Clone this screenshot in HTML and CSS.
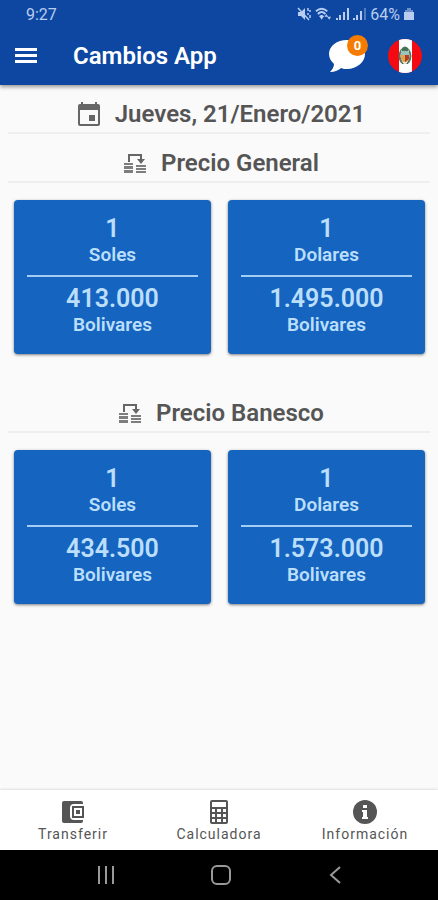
FILE: index.html
```html
<!DOCTYPE html>
<html lang="es">
<head>
<meta charset="utf-8">
<meta name="viewport" content="width=device-width, initial-scale=1">
<title>Cambios App</title>
<link rel="stylesheet" href="styles.css">
</head>
<body>
<svg class="defs" aria-hidden="true">
  <symbol id="exchange" viewBox="0 0 24 24">
    <path d="M6 11V4h12v5" fill="none" stroke="currentColor" stroke-width="2"/>
    <path d="M14 8h8l-4 5z"/>
    <path d="M1 12h9v2H1zM1 15h9v3H1zM1 19h9v3H1zM13 14h10v2H13zM13 17h10v2H13zM13 20h10v2H13z" opacity=".85"/>
  </symbol>
</svg>
<header class="top">
  <div class="status">
    <span>9:27</span>
    <div class="status-icons">
      <svg width="14" height="14" viewBox="0 0 14 14"><path d="M1 5h3l4-4v12L4 9H1z"/><path d="M1 1l11 12M11 1v3M11 6v2M13 3v2M13 8v3" fill="none" stroke="currentColor" stroke-width="1.500"/></svg>
      <svg width="17" height="14" viewBox="0 0 18 14"><g fill="none" stroke="currentColor" stroke-width="2"><path d="M1 4q6-5 12 0M3 7q4-4 8 0M5 10q2-2 4 0"/></g><path d="M7 13l-2-3h4zM12 7l2 3h-4zM15 13l-2-3h4z"/></svg>
      <svg width="13" height="14" viewBox="0 0 13 14"><path d="M0 11h2v2H0zM3 8h2v5H3zM7 5h2v8H7zM11 1h2v12h-2z"/></svg>
      <svg width="13" height="14" viewBox="0 0 13 14"><path d="M0 11h2v2H0zM3 8h2v5H3zM7 4h2v9H7z"/><path d="M11 1h2v12h-2z" opacity=".4"/></svg>
      <span class="battery-text">64%</span>
      <svg width="10" height="14" viewBox="0 0 10 14"><path d="M3 1h4v2h2v10H1V3h2z" opacity=".55"/><path d="M0 5h10v8H0z"/></svg>
    </div>
  </div>
  <div class="appbar">
    <button class="icon-button" aria-label="Menú"><svg width="24" height="24" viewBox="0 0 24 24"><path d="M1 4h22v3H1zM1 10h22v3H1zM1 16h22v3H1z"/></svg></button>
    <h1>Cambios App</h1>
    <button class="icon-button chat" aria-label="Mensajes">
      <svg width="36" height="34" viewBox="0 0 36 34"><path d="M18 1C8 1 0 7 0 15c0 4 2 7 5 10 0 3-2 6-4 8 5 0 9-2 11-4 2 1 4 1 6 1 10 0 18-7 18-15S28 1 18 1z"/></svg>
      <span class="badge">0</span>
    </button>
    <button class="icon-button" aria-label="Perú">
      <svg width="34" height="34" viewBox="0 0 34 34"><defs><clipPath id="disc"><circle cx="17" cy="17" r="17"/></clipPath></defs><g clip-path="url(#disc)"><path fill="#f50a12" d="M0 0h34v34H0z"/><path fill="#fff" d="M11 0h13v34H11z"/></g><path d="M14 10Q9 17 14 24M20 10q5 7 0 14" fill="none" stroke="#55785a" stroke-width="2"/><path fill="#9dc1bd" d="M13 11h8v6h-8z"/><path fill="#e2a24d" d="M13 16h8v4q-4 7-8 0z"/><path fill="#b63b25" d="M17 16h4v4l-4 3z"/><path fill="#477257" d="M14 9q3-3 6 0v3h-6z"/><path fill="#4d6350" d="M14 23q3 4 6 0v2h-6z"/></svg>
    </button>
  </div>
</header>
<main>
  <div class="heading date">
    <svg width="24" height="26" viewBox="0 0 24 26"><path d="M4 1h2v2h12V1h2v2h1q2 0 2 2v18q0 2-2 2H3q-2 0-2-2V5q0-2 2-2h1zM3 9v14h18V9zM12 14h6v6h-6z" fill-rule="evenodd"/></svg>
    <h2>Jueves, 21/Enero/2021</h2>
  </div>
  <section>
    <div class="heading"><svg width="24" height="24"><use href="#exchange"/></svg><h2>Precio General</h2></div>
    <div class="cards">
      <article class="card"><p class="amount">1</p><p class="unit">Soles</p><hr><p class="amount">413.000</p><p class="unit">Bolivares</p></article>
      <article class="card"><p class="amount">1</p><p class="unit">Dolares</p><hr><p class="amount">1.495.000</p><p class="unit">Bolivares</p></article>
    </div>
  </section>
  <section>
    <div class="heading"><svg width="24" height="24"><use href="#exchange"/></svg><h2>Precio Banesco</h2></div>
    <div class="cards">
      <article class="card"><p class="amount">1</p><p class="unit">Soles</p><hr><p class="amount">434.500</p><p class="unit">Bolivares</p></article>
      <article class="card"><p class="amount">1</p><p class="unit">Dolares</p><hr><p class="amount">1.573.000</p><p class="unit">Bolivares</p></article>
    </div>
  </section>
</main>
<nav class="tabs">
  <a href="#transferir"><svg width="24" height="24" viewBox="0 0 24 24"><path d="M3 1h17q2 0 2 2v1H13q-4 0-4 4v8q0 4 4 4h9v1q0 2-2 2H3q-2 0-2-2V3q0-2 2-2z"/><path d="M11 6h12v12H11zM13 8v8h8V8zM15 10h4v4h-4z" fill-rule="evenodd"/></svg><span>Transferir</span></a>
  <a href="#calculadora"><svg width="24" height="24" viewBox="0 0 24 24"><path fill-rule="evenodd" d="M5 0h14q2 0 2 2v20q0 2-2 2H5q-2 0-2-2V2q0-2 2-2zM5 2v5h14V2zM5 9v3h3V9zM10 9v3h4V9zM16 9v3h3V9zM5 14v3h3v-3zM10 14v3h4v-3zM16 14v3h3v-3zM5 19v3h3v-3zM10 19v3h4v-3zM16 19v3h3v-3z"/></svg><span>Calculadora</span></a>
  <a href="#informacion"><svg width="24" height="24" viewBox="0 0 24 24"><circle cx="12" cy="12" r="12"/><path fill="#fff" d="M10 5h4v3h-4zM9 10h5v7h1v2H9v-2h1v-5H9z"/></svg><span>Información</span></a>
</nav>
<div class="system">
  <button aria-label="Recientes"><svg width="20" height="20" viewBox="0 0 20 20"><path d="M3 1v18M10 1v18M17 1v18"/></svg></button>
  <button aria-label="Inicio"><svg width="20" height="20" viewBox="0 0 20 20"><rect x="1" y="1" width="18" height="18" rx="5"/></svg></button>
  <button aria-label="Atrás"><svg width="20" height="20" viewBox="0 0 20 20"><path d="M14 2l-9 8 9 8"/></svg></button>
</div>
</body>
</html>
```
FILE: styles.css
```css
* { box-sizing: border-box; }

body {
  margin: 0;
  min-height: 100vh;
  display: flex;
  flex-direction: column;
  background: #fafafa;
  color: #555;
  font-family: Roboto, "Liberation Sans", sans-serif;
}

h1, h2, p { margin: 0; }
svg { display: block; fill: currentColor; }
.defs { position: absolute; width: 0; height: 0; }

button {
  padding: 0;
  border: 0;
  background: none;
  color: inherit;
  font: inherit;
}

.top {
  background: #0d47a1;
  color: #fff;
  box-shadow: 0 2px 4px rgba(0, 0, 0, 0.4);
}

.status {
  display: flex;
  justify-content: space-between;
  height: 28px;
  padding: 0 24px 0 26px;
  align-items: center;
  font-size: 16px;
  color: #b9cdf0;
}

.status-icons { display: flex; align-items: center; gap: 4px; }

.appbar {
  display: flex;
  align-items: center;
  height: 57px;
  padding: 0 16px 2px 14px;
}

.appbar h1 {
  flex: 1;
  margin-left: 35px;
  font-size: 24px;
  line-height: 28px;
  font-weight: 600;
}

.chat { position: relative; margin-right: 23px; }

.badge {
  position: absolute;
  top: -4px;
  right: -3px;
  width: 21px;
  height: 21px;
  border-radius: 50%;
  background: #f57c00;
  font-size: 13px;
  line-height: 21px;
  font-weight: 700;
}

main { flex: 1; padding: 0 8px; }

.heading {
  display: flex;
  align-items: center;
  justify-content: center;
  gap: 14px;
  height: 49px;
  padding: 10px 0 0 4px;
  border-bottom: 2px solid #eee;
}

.heading svg { color: #666; }

.heading h2 {
  font-size: 24px;
  line-height: 28px;
  font-weight: 600;
}

.cards {
  display: grid;
  grid-template-columns: 1fr 1fr;
  gap: 17px;
  padding: 17px 5px 30px 6px;
}

.card {
  padding: 15px 13px 17px;
  border-radius: 4px;
  background: #1565c0;
  color: #bbdefb;
  text-align: center;
  box-shadow: 0 1px 3px rgba(0, 0, 0, 0.5);
}

.card hr {
  height: 2px;
  margin: 8px 0;
  border: 0;
  background: #a4cdf5;
}

.amount { font-size: 25px; line-height: 28px; font-weight: 600; }
.unit { font-size: 19px; line-height: 24px; font-weight: 600; }

.tabs {
  display: grid;
  grid-template-columns: repeat(3, 1fr);
  height: 60px;
  background: #fff;
  box-shadow: 0 0 3px rgba(0, 0, 0, 0.2);
}

.tabs a {
  display: flex;
  flex-direction: column;
  align-items: center;
  padding-top: 10px;
  gap: 1px;
  color: #555;
  font-size: 14px;
  line-height: 18px;
  letter-spacing: 1px;
  text-decoration: none;
}

.system {
  display: flex;
  justify-content: space-between;
  align-items: center;
  height: 50px;
  padding: 0 21% 0 22%;
  background: #000;
  color: #999;
}

.system svg { fill: none; stroke: currentColor; stroke-width: 2; }
```
